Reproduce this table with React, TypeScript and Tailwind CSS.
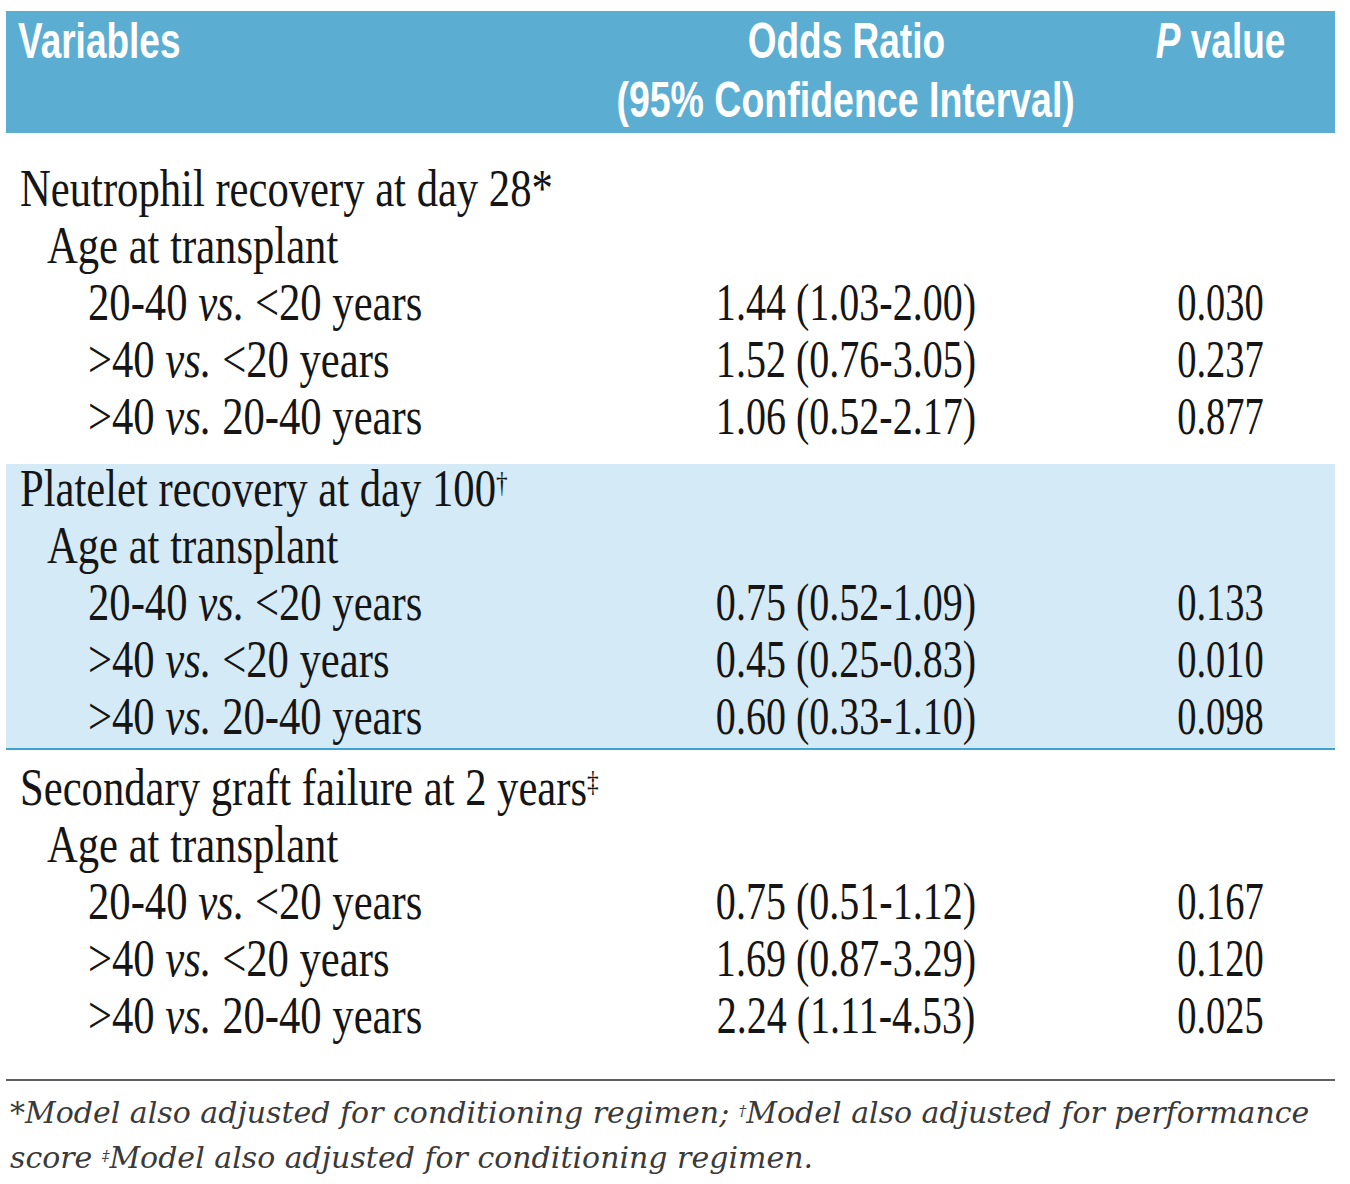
import type { ReactNode } from 'react';

type Row = { label: ReactNode; level: 0 | 1 | 2; odds?: string; p?: string };

const vs = <span className="italic">vs.</span>;

const ageRows = (vals: [string, string][]): Row[] => [
  { label: 'Age at transplant', level: 1 },
  { label: <>20-40 {vs} &lt;20 years</>, level: 2, odds: vals[0][0], p: vals[0][1] },
  { label: <>&gt;40 {vs} &lt;20 years</>, level: 2, odds: vals[1][0], p: vals[1][1] },
  { label: <>&gt;40 {vs} 20-40 years</>, level: 2, odds: vals[2][0], p: vals[2][1] },
];

const neutrophil: Row[] = [
  { label: 'Neutrophil recovery at day 28*', level: 0 },
  ...ageRows([
    ['1.44 (1.03-2.00)', '0.030'],
    ['1.52 (0.76-3.05)', '0.237'],
    ['1.06 (0.52-2.17)', '0.877'],
  ]),
];

const platelet: Row[] = [
  {
    label: (
      <>
        Platelet recovery at day 100<sup className="text-[0.55em]">†</sup>
      </>
    ),
    level: 0,
  },
  ...ageRows([
    ['0.75 (0.52-1.09)', '0.133'],
    ['0.45 (0.25-0.83)', '0.010'],
    ['0.60 (0.33-1.10)', '0.098'],
  ]),
];

const graft: Row[] = [
  {
    label: (
      <>
        Secondary graft failure at 2 years<sup className="text-[0.55em]">‡</sup>
      </>
    ),
    level: 0,
  },
  ...ageRows([
    ['0.75 (0.51-1.12)', '0.167'],
    ['1.69 (0.87-3.29)', '0.120'],
    ['2.24 (1.11-4.53)', '0.025'],
  ]),
];

const indent = { 0: 'pl-[14px]', 1: 'pl-[41px]', 2: 'pl-[82px]' };

function Rows({ rows }: { rows: Row[] }) {
  return (
    <div className="flex flex-col gap-[13px]">
      {rows.map((r, i) => (
        <div key={i} className="grid grid-cols-[620px_440px_269px] h-[44px] leading-[44px] text-[52px]">
          <div className={`${indent[r.level]} whitespace-nowrap`}>
            <span className="inline-block origin-left scale-x-[0.82]">{r.label}</span>
          </div>
          <div className="flex justify-center whitespace-nowrap">
            {r.odds && <span className="inline-block scale-x-[0.77]">{r.odds}</span>}
          </div>
          <div className="flex justify-center pl-10 whitespace-nowrap">
            {r.p && <span className="inline-block scale-x-[0.74]">{r.p}</span>}
          </div>
        </div>
      ))}
    </div>
  );
}

export default function App() {
  return (
    <div className="bg-white w-[1350px] h-[1184px] pt-[11px] pl-[6px] text-[#151515] font-['Liberation_Serif',serif]">
      <div className="w-[1329px]">
        {/* Header */}
        <div className="h-[122px] pt-px bg-[#5baed2] text-white font-bold text-[50px] leading-[59px] grid grid-cols-[620px_440px_269px] font-['Liberation_Sans',Arial,sans-serif]">
          <div className="pl-[12px] whitespace-nowrap">
            <span className="inline-block origin-left scale-x-[0.74]">Variables</span>
          </div>
          <div className="flex flex-col items-center whitespace-nowrap">
            <span className="inline-block scale-x-[0.74]">Odds Ratio</span>
            <span className="inline-block scale-x-[0.75]">(95% Confidence Interval)</span>
          </div>
          <div className="flex justify-center pl-10 whitespace-nowrap">
            <span className="inline-block scale-x-[0.74]">
              <span className="italic">P</span> value
            </span>
          </div>
        </div>

        <div className="pt-[34px] pb-[25px]">
          <Rows rows={neutrophil} />
        </div>

        <div className="bg-[#d5eaf7] pt-[3px] pb-[9px] border-b-2 border-[#3ea3d2]">
          <Rows rows={platelet} />
        </div>

        <div className="pt-[16px] pb-[41px] border-b-2 border-[#5e5e5e]">
          <Rows rows={graft} />
        </div>

        {/* Footnote */}
        <div className="pt-[9px] pl-1 italic text-[30px] leading-[45px] text-[#3a3a3a] font-['DejaVu_Serif',serif]">
          <p className="whitespace-nowrap">
            *Model also adjusted for conditioning regimen; <sup className="text-[0.5em]">†</sup>Model also adjusted for
            performance
          </p>
          <p className="whitespace-nowrap">
            score <sup className="text-[0.5em]">‡</sup>Model also adjusted for conditioning regimen.
          </p>
        </div>
      </div>
    </div>
  );
}
